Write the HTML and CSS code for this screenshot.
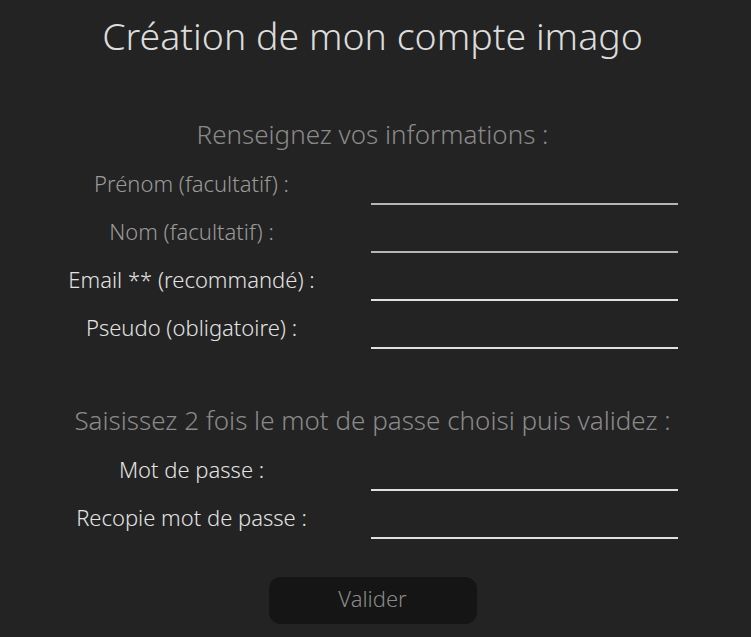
FILE: index.html
```html
<!DOCTYPE html>
<html lang="fr">
<head>
<meta charset="utf-8">
<title>Création de mon compte imago</title>
<link rel="stylesheet" href="styles.css">
</head>
<body>
<main class="page">
  <h1 class="title">Création de mon compte imago</h1>
  <form class="form">
    <h2 class="section-title">Renseignez vos informations :</h2>
    <div class="fields">
      <label class="label label-muted" for="prenom">Prénom (facultatif) :</label>
      <input class="field field-muted" id="prenom" type="text">
      <label class="label label-muted" for="nom">Nom (facultatif) :</label>
      <input class="field field-muted" id="nom" type="text">
      <label class="label" for="email">Email ** (recommandé) :</label>
      <input class="field" id="email" type="text">
      <label class="label" for="pseudo">Pseudo (obligatoire) :</label>
      <input class="field" id="pseudo" type="text">
    </div>
    <h2 class="section-title section-title-2">Saisissez 2 fois le mot de passe choisi puis validez :</h2>
    <div class="fields">
      <label class="label" for="mdp">Mot de passe :</label>
      <input class="field" id="mdp" type="password">
      <label class="label" for="mdp2">Recopie mot de passe :</label>
      <input class="field" id="mdp2" type="password">
    </div>
    <div class="actions">
      <button class="btn" type="button">Valider</button>
    </div>
  </form>
</main>
</body>
</html>
```
FILE: styles.css
```css
html, body {
  margin: 0;
  padding: 0;
  background: #232323;
}
body {
  font-family: "Noto Sans", Lato, sans-serif;
  color: #dddddd;
}
.page {
  width: 745px;
}
.title {
  margin: 0;
  padding-top: 11px;
  font-size: 37.5px;
  line-height: 50px;
  font-weight: 300;
  text-align: center;
  color: #dcdcdc;
}
.form {
  margin: 0;
}
.section-title {
  margin: 57px 0 9px;
  font-size: 26px;
  line-height: 32px;
  font-weight: 300;
  text-align: center;
  color: #8a8a8a;
}
.section-title-2 {
  margin-top: 53px;
}
.fields {
  display: grid;
  grid-template-columns: 303px 307px;
  grid-auto-rows: 48px;
  column-gap: 28px;
  padding-left: 40px;
}
.label {
  align-self: center;
  text-align: center;
  font-size: 22px;
  font-weight: 300;
  color: #e2e2e2;
}
.label-muted {
  color: #9a9a9a;
}
.field {
  align-self: end;
  margin: 0 0 2px;
  height: 26px;
  padding: 0;
  border: 0;
  border-bottom: 2px solid #e0e0e0;
  background: transparent;
  color: #eee;
  font: inherit;
  outline: none;
}
.field-muted {
  border-bottom-color: #b5b5b5;
}
.actions {
  display: flex;
  justify-content: center;
  margin-top: 36px;
}
.btn {
  width: 208px;
  height: 47px;
  padding: 0 0 5px;
  border: 0;
  border-radius: 12px;
  background: #151515;
  color: #8a8a8a;
  font-family: inherit;
  font-size: 22px;
  font-weight: 300;
}
```
